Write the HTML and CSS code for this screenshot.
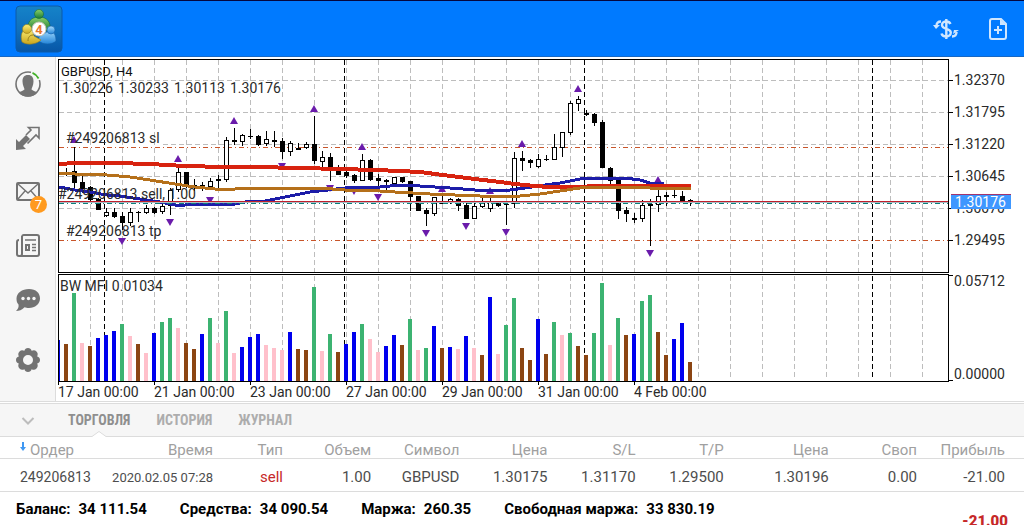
FILE: index.html
```html
<!DOCTYPE html>
<html lang="ru">
<head>
<meta charset="utf-8">
<meta name="viewport" content="width=device-width, initial-scale=1">
<title>GBPUSD, H4</title>
<link rel="stylesheet" href="styles.css">
</head>
<body>
<header class="topbar">
  <svg class="logo" viewBox="0 0 48 48" role="img" aria-label="MetaTrader 4">
    <defs>
      <linearGradient id="tile" x1="0" y1="0" x2="0" y2="1"><stop offset="0" stop-color="#1583c8"/><stop offset=".55" stop-color="#0f6fbd"/><stop offset="1" stop-color="#0756a6"/></linearGradient>
      <linearGradient id="green" x1="0" y1="0" x2="0" y2="1"><stop offset="0" stop-color="#8bd069"/><stop offset="1" stop-color="#187a35"/></linearGradient>
      <linearGradient id="gold" x1="0" y1="0" x2="0" y2="1"><stop offset="0" stop-color="#fff27a"/><stop offset="1" stop-color="#c9a51c"/></linearGradient>
      <linearGradient id="sky" x1="0" y1="0" x2="0" y2="1"><stop offset="0" stop-color="#a5dcff"/><stop offset="1" stop-color="#2384d8"/></linearGradient>
    </defs>
    <rect x="1" y="1" width="46" height="46" rx="4" fill="url(#tile)" stroke="#0d5aa8"/>
    <path d="M13 25c-1-8 3-13 11-13s12 5 11 13l-4 1-7-8-7 8z" fill="url(#green)" stroke="#166a38" stroke-width=".6"/>
    <circle cx="24" cy="9" r="4.500" fill="url(#green)" stroke="#166a38" stroke-width=".6"/>
    <path d="M24 36c-1-3 0-5 3-6l8-5c4 1 6 6 6 11-4 4-13 4-17 0z" fill="url(#sky)" stroke="#1560a8" stroke-width=".6"/>
    <circle cx="36" cy="25" r="4" fill="url(#sky)" stroke="#1560a8" stroke-width=".6"/>
    <path d="M7 37c-2-7 0-12 5-14 4 0 6 3 7 8l7 4c-4 4-13 6-19 2z" fill="url(#gold)" stroke="#98801c" stroke-width=".6"/>
    <circle cx="12" cy="24" r="4.500" fill="url(#gold)" stroke="#98801c" stroke-width=".6"/>
    <path d="M13 36c0-4 2-6 5-6" fill="none" stroke="#98801c"/>
    <circle cx="24" cy="24" r="7" fill="#fff" stroke="#c5c5b5"/>
    <text x="24" y="29" class="logo-digit">4</text>
  </svg>
  <div class="actions">
    <button class="action" type="button" aria-label="Котировки">
      <svg viewBox="0 0 28 24" width="28" height="24" fill="none" stroke="#cfe6ff" stroke-width="2.400">
        <path d="M18.500 7c-.8-1.800-2.300-2.500-4.200-2.500-2.500 0-4.300 1.300-4.300 3.500 0 5 8.800 2.800 8.800 7.500 0 2.500-2 4-4.500 4-2.300 0-4.300-1-4.800-3M14.300 2v20"/>
        <path d="M9 4.500C6 4.500 4.500 6 4.500 9M20 19.500c3 0 4.500-1.500 4.500-4.500"/>
        <path d="M1 8h7l-4 4zM21 17l1-4h5z" fill="#cfe6ff" stroke="none"/>
      </svg>
    </button>
    <button class="action" type="button" aria-label="Новый ордер">
      <svg viewBox="0 0 20 24" width="20" height="24" fill="none" stroke="#cfe6ff" stroke-width="2">
        <path d="M4 2h9l5 5v13a2 2 0 0 1-2 2H4a2 2 0 0 1-2-2V4a2 2 0 0 1 2-2z"/>
        <path d="M12 2v6h6z" fill="#cfe6ff" stroke="none"/>
        <path d="M10 9v8M6 13h8"/>
      </svg>
    </button>
  </div>
</header>

<main class="workspace">
  <nav class="sidebar" aria-label="Меню">
    <button class="tool" type="button" aria-label="Счета">
      <svg viewBox="0 0 28 28">
        <circle cx="14" cy="14" r="12" fill="none" stroke="#737373" stroke-width="1.600"/>
        <path d="M17 2.400A12 12 0 0 1 25.500 10" fill="none" stroke="#f6f6f6" stroke-width="4"/>
        <path d="M18.500 2.900A12 12 0 0 1 24.600 8.500" fill="none" stroke="#43b02a" stroke-width="1.800"/>
        <path d="M14 5c4 0 5.500 2.500 5.500 6.500S17.500 18 17.500 19.500c2 2 4 1.500 6 3A12.600 12.600 0 0 1 4.500 22.500c2-1.500 4-1 6-3 0-1.500-2-4-2-8S10 5 14 5z" fill="#737373"/>
      </svg>
    </button>
    <button class="tool" type="button" aria-label="Торговля">
      <svg viewBox="0 0 28 28">
        <path d="M2 26V15l3 3 7-7 4 4-7 7 3 3z" fill="#737373"/>
        <path d="M12 11l5-5-2.500-2.500H25V14l-3-3-8.500 8.500" fill="none" stroke="#737373" stroke-width="1.600"/>
      </svg>
    </button>
    <button class="tool" type="button" aria-label="Почта, 7 новых">
      <svg viewBox="0 0 28 28" fill="none" stroke="#737373">
        <rect x="3" y="5" width="22" height="17" rx="1" stroke-width="2"/>
        <path d="M4 6l10 9L24 6M4 21l7-8M24 21l-7-8" stroke-width="1.400"/>
      </svg>
      <span class="badge">7</span>
    </button>
    <button class="tool" type="button" aria-label="Новости">
      <svg viewBox="0 0 28 28" fill="none" stroke="#737373" stroke-width="2">
        <path d="M8 4a2 2 0 0 1 2-1h13a2 2 0 0 1 2 2v17a2 2 0 0 1-2 2H5a2 2 0 0 1-2-2V10a2 2 0 0 1 2-2M8 4v18a2 2 0 0 1-2 2"/>
        <path d="M11 8h11M18 12.500h4M18 15.500h4M18 18.500h4" stroke-width="1.400"/>
        <rect x="12" y="13" width="3" height="5"/>
      </svg>
    </button>
    <button class="tool" type="button" aria-label="Чат">
      <svg viewBox="0 0 28 28">
        <path d="M15 3c7 0 11 4 11 9.500S21 22 15 22c-2 0-3-.3-4.500-.8C8 24 5 25 2 25c2-2 3-4 2.500-6.500C3 17 2.500 15 2.500 12.500 2.500 7 8 3 15 3z" fill="#737373"/>
        <circle cx="9" cy="12.500" r="1.700" fill="#f6f6f6"/><circle cx="14.500" cy="12.500" r="1.700" fill="#f6f6f6"/><circle cx="20" cy="12.500" r="1.700" fill="#f6f6f6"/>
      </svg>
    </button>
    <button class="tool tool-last" type="button" aria-label="Настройки">
      <svg viewBox="0 0 28 28">
        <path fill="#737373" fill-rule="evenodd" d="M14 2c2 0 3 1 3.600 2.800C19.500 4 21 4 22.500 5.500S24 8.500 23.200 10.400C25 11 26 12 26 14s-1 3-2.800 3.600C24 19.500 24 21 22.500 22.500S19.500 24 17.600 23.200C17 25 16 26 14 26s-3-1-3.600-2.800C8.500 24 7 24 5.500 22.500S4 19.500 4.800 17.600C3 17 2 16 2 14s1-3 2.800-3.600C4 8.500 4 7 5.500 5.500S8.500 4 10.400 4.800C11 3 12 2 14 2zm0 7a5 5 0 1 0 0 10 5 5 0 0 0 0-10z"/>
      </svg>
    </button>
  </nav>
  <section class="chart-area" aria-label="График GBPUSD, H4">
    <svg id="chart" class="chart" viewBox="56 57 968 344"></svg>
  </section>
</main>

<section class="terminal">
  <div class="tabs" role="tablist">
    <button class="collapse" type="button" aria-label="Свернуть">
      <svg viewBox="0 0 14 8" width="14" height="8"><path d="M1.500 1L7 6.500 12.500 1" fill="none" stroke="#bdbdbd" stroke-width="2"/></svg>
    </button>
    <button class="tab tab-active" type="button" role="tab" aria-selected="true">ТОРГОВЛЯ
      <svg class="notch" viewBox="0 0 14 6" width="14" height="6"><path d="M0 5.500L7 .5l7 5V6H0z" fill="#fff"/><path d="M0 5.500L7 .5l7 5" fill="none" stroke="#dcdcdc"/></svg>
    </button>
    <button class="tab" type="button" role="tab" aria-selected="false">ИСТОРИЯ</button>
    <button class="tab" type="button" role="tab" aria-selected="false">ЖУРНАЛ</button>
  </div>
  <table class="orders">
    <colgroup><col class="c-order"><col class="c-time"><col class="c-type"><col class="c-mid"><col class="c-mid"><col class="c-mid"><col class="c-mid"><col class="c-mid"><col class="c-now"><col class="c-mid"><col class="c-profit"></colgroup>
    <thead>
      <tr><th class="order"><svg class="sort" viewBox="0 0 6 10" width="6" height="10"><path d="M3 0v6" stroke="#3f97f2" stroke-width="2"/><path d="M0 5h6L3 9z" fill="#3f97f2"/></svg>Ордер</th><th>Время</th><th>Тип</th><th>Объем</th><th>Символ</th><th>Цена</th><th>S/L</th><th>T/P</th><th>Цена</th><th>Своп</th><th>Прибыль</th></tr>
    </thead>
    <tbody>
      <tr><td class="order">249206813</td><td class="time">2020.02.05 07:28</td><td class="sell">sell</td><td>1.00</td><td>GBPUSD</td><td>1.30175</td><td>1.31170</td><td>1.29500</td><td>1.30196</td><td>0.00</td><td>-21.00</td></tr>
    </tbody>
  </table>
  <div class="summary">
    <dl class="totals">
      <div class="total"><dt>Баланс:</dt><dd>34 111.54</dd></div>
      <div class="total"><dt>Средства:</dt><dd>34 090.54</dd></div>
      <div class="total"><dt>Маржа:</dt><dd>260.35</dd></div>
      <div class="total"><dt>Свободная маржа:</dt><dd>33 830.19</dd></div>
    </dl>
    <strong class="result">-21.00</strong>
  </div>
</section>
<script src="chart.js"></script>
</body>
</html>
```
FILE: styles.css
```css
* { box-sizing: border-box; }
body {
  margin: 0;
  height: 100vh;
  overflow: hidden;
  display: flex;
  flex-direction: column;
  background: #fff;
  color: #4d4d4d;
  font-family: Roboto, "Liberation Sans", sans-serif;
  font-size: 15px;
}
button {
  margin: 0;
  padding: 0;
  border: 0;
  background: none;
  color: inherit;
  font: inherit;
  cursor: pointer;
}
.topbar {
  flex: none;
  height: 57px;
  display: flex;
  align-items: center;
  justify-content: space-between;
  padding: 0 16px 0 15px;
  background: #007aff;
  border-top: 1px solid #04063f;
  border-bottom: 1px solid #1768c4;
}
.logo { width: 48px; height: 48px; }
.logo-digit {
  font-size: 13px;
  font-weight: 700;
  fill: #e8792b;
  text-anchor: middle;
}
.actions { display: flex; gap: 28px; }
.action { display: flex; }

.workspace { flex: none; display: flex; }
.sidebar {
  flex: none;
  width: 56px;
  display: flex;
  flex-direction: column;
  background: #f6f6f6;
  border-right: 1px solid #dcdcdc;
}
.tool {
  position: relative;
  height: 54px;
  display: flex;
  align-items: center;
  justify-content: center;
}
.tool svg { width: 28px; height: 28px; }
.tool-last { margin-top: 6px; }
.badge {
  position: absolute;
  left: 30px;
  top: 31px;
  width: 17px;
  height: 17px;
  border-radius: 50%;
  background: #ff9a1f;
  color: #fff;
  font-size: 13px;
  line-height: 17px;
  text-align: center;
}
.chart-area { flex: 1; min-width: 0; }
.chart { display: block; width: 100%; }
.chart text { font-size: 14px; fill: #2a2a2a; }
.chart .chart-title { font-size: 13px; fill: #111; }
.chart .price-now { fill: #fff; }

.terminal { flex: none; border-top: 1px solid #dcdcdc; }
.tabs {
  margin-top: 1px;
  height: 34px;
  display: flex;
  align-items: stretch;
  gap: 26px;
  padding-left: 21px;
  background: #f6f6f6;
  border-top: 1px solid #dcdcdc;
  border-bottom: 1px solid #dcdcdc;
}
.collapse { width: 14px; margin-right: 7px; }
.tab {
  position: relative;
  color: #adadad;
  font-family: "Roboto Condensed", Roboto, sans-serif;
  font-size: 14px;
  font-weight: 700;
}
.tab-active { color: #8f8f8f; }
.notch { position: absolute; left: 50%; bottom: -1px; margin-left: -7px; }

.orders {
  width: 100%;
  table-layout: fixed;
  border-collapse: collapse;
}
.c-order { width: 106px; }
.c-time { width: 107px; }
.c-type { width: 70px; }
.c-now { width: 105px; }
.c-profit { width: 107px; }
.orders th, .orders td {
  padding: 0;
  text-align: right;
  white-space: nowrap;
  border-bottom: 1px solid #dcdcdc;
}
.orders th {
  height: 21px;
  padding-top: 5px;
  color: #a0a0a0;
  font-weight: 400;
  line-height: 15px;
}
.orders td { height: 33px; padding-top: 4px; }
.orders .order { padding-left: 20px; text-align: left; }
.orders td.order { font-size: 14px; }
.orders .time { font-size: 13px; }
.orders .sell { color: #c62828; }
.orders th:last-child, .orders td:last-child { padding-right: 19px; }
.sort { margin-right: 4px; vertical-align: 3px; }

.summary {
  display: flex;
  justify-content: space-between;
  padding: 8px 16px 0;
  color: #000;
  font-weight: 700;
  line-height: 18px;
}
.totals { display: flex; gap: 33px; margin: 0; }
.total { display: flex; gap: 8px; }
.total dd { margin: 0; }
.result { margin-top: 12px; color: #c62828; }
```
FILE: chart.js
```js
const svg = document.getElementById('chart');
const NS = 'http://www.w3.org/2000/svg';

function add(name, attrs, text) {
  const el = document.createElementNS(NS, name);
  for (const key in attrs) el.setAttribute(key, attrs[key]);
  if (text !== undefined) el.textContent = text;
  svg.appendChild(el);
}
function path(d, stroke, width, dash) {
  add('path', { d, fill: 'none', stroke, 'stroke-width': width || 1, 'stroke-dasharray': dash || 'none', 'shape-rendering': 'crispEdges' });
}
function label(x, y, text, cls) {
  add('text', { x, y, class: cls || '' }, text);
}
const toY = v => 55 + Math.round(v / 3);

// Grid
for (let x = 90; x <= 922; x += 32) path(`M${x}.5 60V272M${x}.5 276V380`, '#bdbdbd', 1, '5 3');
for (const y of [80, 112, 176, 208]) path(`M59 ${y}.5H948`, '#bdbdbd', 1, '5 3');
path('M163 144.5H948', '#bdbdbd', 1, '5 3');
for (const x of [104, 344, 584, 872]) path(`M${x}.5 60V272M${x}.5 276V380`, '#000', 1, '5 3');

// Order levels
path('M59 147.5H948M59 240.5H948', '#c8552a', 1, '5 3 1 3');

// Market facilitation index, drawn every 8px
const colors = { n: '#0000ee', w: '#8b4513', g: '#3cb371', p: '#ffc0cb' };
const mfi = 'n210 w222 g69 p219 w228 n204 n195 n183 g162 p198 w222 p249 n189 g156 g144 p174 w219 w237 n192 g144 p219 g123 p249 n231 n201 n192 p225 p234 p240 n186 w237 w240 g51 p243 g192 w246 n222 n186 g162 p207 p246 n228 n195 w225 g147 p240 g234 n168 w234 n231 p237 n198 p234 w255 n81 p252 g165 g84 w234 w270 n147 w252 g156 p195 g189 w228 w255 g189 g39 p225 g144 w195 n192 g93 g75 w186 w255 n207 n159 w276'.split(' ');
mfi.forEach((bar, i) => {
  const y = 270 + Math.round(bar.slice(1) / 3);
  const x = i ? 56 + i * 8 : 58;
  add('rect', { x, y, width: i ? 4 : 2, height: 381 - y, fill: colors[bar[0]] });
});

// Candles: high, body top, body bottom, low, filled
const candles = [
  [340,357,361,363,1],[277,348,383,400,1],[362,380,403,410,1],[393,395,434,443,1],[430,432,465,465,1],
  [460,472,482,485,0],[460,470,486,490,1],[472,484,504,525,1],[460,472,503,512,0],[468,472,475,500,1],
  [450,460,475,477,0],[455,460,473,478,1],[445,454,472,476,0],[400,405,454,480,0],[340,352,405,410,0],
  [350,350,397,400,1],[372,390,392,407,1],[380,391,393,407,1],[370,378,395,405,0],[360,373,379,408,0],
  [247,256,374,380,0],[219,255,261,269,1],[238,241,260,272,0],[222,242,245,252,1],[240,243,270,272,1],
  [228,252,268,272,0],[228,255,261,277,1],[250,258,290,312,1],[258,265,290,302,0],[265,279,284,285,1],
  [262,268,280,282,0],[183,267,318,328,1],[289,307,320,335,0],[294,306,340,378,1],[330,343,360,360,1],
  [345,352,363,370,1],[358,360,377,385,1],[297,316,377,378,0],[313,316,374,377,1],[357,370,377,403,1],
  [373,375,380,405,1],[365,367,388,390,0],[365,366,381,384,1],[377,378,426,468,1],[422,423,468,468,1],
  [458,465,477,513,1],[425,427,476,483,0],[420,444,446,446,1],[429,433,445,448,0],[430,432,453,468,1],
  [440,450,492,492,1],[445,454,491,492,0],[430,441,455,460,0],[428,441,461,470,0],[438,441,453,456,1],
  [440,447,449,510,1],[291,310,448,458,0],[288,309,318,348,1],[312,315,323,340,1],[297,313,335,338,0],
  [300,313,316,318,1],[237,277,314,314,0],[231,232,278,306,0],[138,145,233,240,0],[123,133,146,168,0],
  [165,174,179,183,1],[174,178,204,212,1],[195,202,339,339,1],[336,339,378,388,1],[373,376,468,492,1],
  [456,465,476,502,1],[474,489,494,503,1],[435,451,491,500,0],[432,447,453,573,1],[405,424,449,470,0],
  [411,420,425,452,1],[404,420,423,430,1],[408,423,438,445,1],[432,435,443,453,1]
];
path('M59 174.5H62', '#000');
candles.forEach(([high, top, bottom, low, filled], i) => {
  const x = 66 + i * 8;
  path(`M${x}.5 ${toY(high)}V${toY(low)}`, '#000');
  const y = toY(top);
  const height = Math.max(1, toY(bottom) - y);
  if (filled) add('rect', { x: x - 2, y, width: 5, height, fill: '#000' });
  else add('rect', { x: x - 1.5, y: y + 0.5, width: 4, height: Math.max(1, height - 1), fill: '#fff', stroke: '#000' });
});

// Fractals
for (const [x, y] of [[74,136],[178,155],[234,117],[314,105],[362,143],[522,140],[442,185],[490,187],[578,85],[658,176]]) {
  add('path', { d: `M${x} ${y}l4 7h-8z`, fill: '#6a1bab' });
}
for (const [x, y] of [[122,238],[170,219],[210,197],[282,163],[330,185],[354,188],[378,194],[426,230],[466,223],[506,229],[650,250]]) {
  add('path', { d: `M${x} ${y + 7}l4-7h-8z`, fill: '#6a1bab' });
}

// Moving averages
path('M59 187L75 190 90 192 107 195 120 196 140 199 160 202 175 205 185 205 205 204 215 205 235 204 245 202 265 201 285 197 310 192 345 188 380 187 400 185 420 186 450 188 475 190 510 190 525 188 545 185 560 183 575 180 585 178 625 178 640 180 650 183 664 184', '#1c1ca8', 3);
path('M59 164L75 163 115 163 150 164 185 166 225 167 255 167 300 168 340 169 375 170 400 171 420 172 443 175 475 179 500 182 515 184 535 186 550 187 575 187 600 186 691 186', '#d8230f', 4);
path('M59 173L75 174 107 175 130 177 150 180 175 184 195 187 215 189 235 189 255 188 320 188 345 190 365 190 395 192 430 194 455 195 480 196 520 196 540 194 560 191 580 188 605 187 640 187 650 188 691 188', '#b5701a', 3);

// Current price
path('M59 201.5H948', '#c01f2b');
path('M59 202.5H948', '#a9b8c2');
path('M59 203.5H948', '#0b7d78', 1, '5 3 1 3');

// Frames and ticks
path('M58.500 59.500H948.500V272.500H58.500zM58.500 274.500H948.500V381.500H58.500z', '#000');
path('M58.500 381V385M154.500 381V385M250.500 381V385M346.500 381V385M442.500 381V385M538.500 381V385M634.500 381V385', '#000');
path('M949 80.500H953M949 112.500H953M949 144.500H953M949 176.500H953M949 208.500H953M949 240.500H953M949 275.500H953M949 380.500H953', '#000');

// Captions
label(61, 76, 'GBPUSD, H4', 'chart-title');
[['1.30226', 62], ['1.30233', 118], ['1.30113', 174], ['1.30176', 230]].forEach(([t, x]) => label(x, 93, t));
label(66, 143, '#249206813 sl');
label(58, 199, '#249206813 sell, 1.00');
label(66, 236, '#249206813 tp');
label(60, 291, 'BW MFI 0.01034');
[['1.32370', 85], ['1.31795', 117], ['1.31220', 149], ['1.30645', 181], ['1.30070', 213], ['1.29495', 245], ['0.05712', 286], ['0.00000', 379]].forEach(([t, y]) => label(954, y, t));
['17 Jan 00:00', '21 Jan 00:00', '23 Jan 00:00', '27 Jan 00:00', '29 Jan 00:00', '31 Jan 00:00', '4 Feb 00:00'].forEach((t, i) => label(58 + i * 96, 397, t));
add('rect', { x: 951, y: 194, width: 60, height: 15, fill: '#3e97ff' });
add('rect', { x: 951, y: 194, width: 60, height: 1, fill: '#a3346c' });
label(955, 207, '1.30176', 'price-now');
```
